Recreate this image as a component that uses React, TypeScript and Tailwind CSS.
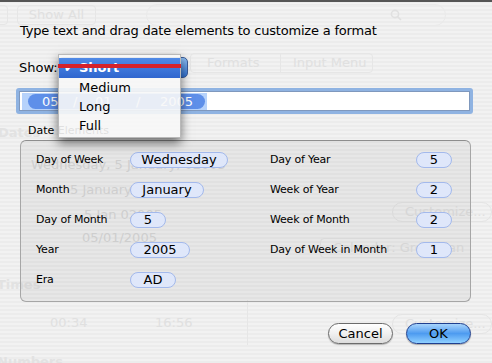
import React from 'react';

const leftRows = [
  { label: 'Day of Week', value: 'Wednesday', w: 'w-[98px]' },
  { label: 'Month', value: 'January', w: 'w-[74px]' },
  { label: 'Day of Month', value: '5', w: 'w-[36px]' },
  { label: 'Year', value: '2005', w: 'w-[60px]' },
  { label: 'Era', value: 'AD', w: 'w-[46px]' },
];

const rightRows = [
  { label: 'Day of Year', value: '5' },
  { label: 'Week of Year', value: '2' },
  { label: 'Week of Month', value: '2' },
  { label: 'Day of Week in Month', value: '1' },
];

const Token = ({ value, w }: { value: string; w: string }) => (
  <span className={`${w} h-[16px] rounded-full border border-[#a3b9ec] bg-[#dfe7fa] text-[13px] leading-[14px] text-black flex items-center justify-center`}>
    {value}
  </span>
);

// the window behind the sheet, seen faintly through it
const Ghost = () => (
  <div className="absolute inset-0 text-[#e0e0e0] text-[13px] pointer-events-none">
    <div className="absolute left-[-10px] top-[5px] w-[18px] h-[20px] rounded border border-[#e6e6e6]" />
    <div className="absolute left-[17px] top-[5px] w-[79px] h-[20px] rounded border border-[#e6e6e6] flex items-center justify-center">Show All</div>
    <div className="absolute left-[146px] top-[4px] w-[300px] h-[22px] rounded-full border border-[#eaeaea] flex items-center pl-[243px]">
      <svg width="12" height="12" viewBox="0 0 12 12" fill="none" stroke="#e0e0e0" strokeWidth="1.6"><circle cx="5" cy="5" r="3.6" /><path d="M7.6 7.6 11 11" /></svg>
    </div>
    <div className="absolute left-[190px] top-[53px] w-[183px] h-[20px] rounded border border-[#e6e6e6] flex items-center">
      <span className="w-[90px] pl-[16px] border-r border-[#e6e6e6]">Formats</span>
      <span className="pl-[12px]">Input Menu</span>
    </div>
    <div className="absolute left-[-2px] top-[123px] font-bold text-[#e2e2e2]">Dates</div>
    <div className="absolute left-[31px] top-[155px] text-[#d8d8d8]">Wednesday, 5 January, 02005</div>
    <div className="absolute left-[70px] top-[180px] text-[#d8d8d8]">5 January 02005</div>
    <div className="absolute left-[84px] top-[205px] text-[#d8d8d8]">5 Jan 02005</div>
    <div className="absolute left-[82px] top-[228px] text-[#d8d8d8]">05/01/2005</div>
    <div className="absolute left-[392px] top-[202px] w-[100px] h-[20px] rounded-full border border-[#e4e4e4] pl-[12px] leading-[18px]">Customize...</div>
    <div className="absolute left-[320px] top-[238px] w-[175px] h-[20px] rounded border border-[#e4e4e4] leading-[18px] pl-[12px]">Calendar: Gregorian</div>
    <div className="absolute left-[-3px] top-[275px] font-bold text-[#e2e2e2]">Times</div>
    <div className="absolute left-[50px] top-[313px]">00:34</div>
    <div className="absolute left-[155px] top-[313px]">16:56</div>
    <div className="absolute left-[247px] top-[300px] w-px h-[45px] bg-[#e6e6e6]" />
    <div className="absolute left-[392px] top-[314px] w-[100px] h-[20px] rounded-full border border-[#e4e4e4] pl-[12px] leading-[18px]">Customize...</div>
    <div className="absolute left-[-3px] top-[352px] font-bold text-[#e2e2e2]">Numbers</div>
  </div>
);

export default function App() {
  return (
    <div className="relative w-[492px] h-[363px] overflow-hidden bg-[repeating-linear-gradient(0deg,#ececec_0px,#ececec_2px,#f2f2f2_2px,#f2f2f2_4px)] font-['DejaVu_Sans',sans-serif] text-black">
      <Ghost />

      <div className="relative flex flex-col">
        <div className="h-[2px] bg-[#555]" />

        <div className="mt-[21px] pl-[20px] h-[16px] text-[13px] leading-[16px] tracking-[-0.2px]">
          Type text and drag date elements to customize a format
        </div>

        <div className="mt-[18px] flex items-center h-[21px] pl-[19px]">
          <span className="text-[13px] w-[39px]">Show:</span>
          <div className="w-[130px] h-[21px] rounded-[5px] border border-[#3b5d9a] bg-gradient-to-b from-[#8fc0f5] to-[#2f6fcf]" />
        </div>

        <div className="mt-[10px] ml-[16px] w-[457px] h-[26px] rounded-[3px] bg-[#8fb3e2] p-[3px]">
          <div className="h-full bg-white border border-[#7f98bd] flex items-center pl-[2px]">
            <div className="w-[185px] h-[17px] bg-[#b6d2fb] flex items-center pl-[6px]">
              <div className="relative w-[177px] h-[15px] rounded-full bg-[#5e8fe9] text-white text-[13px] leading-[15px]">
                <span className="absolute left-[14px]">05</span>
                <span className="absolute left-[45px]">/</span>
                <span className="absolute left-[67px]">01</span>
                <span className="absolute left-[108px]">/</span>
                <span className="absolute left-[132px]">2005</span>
              </div>
            </div>
          </div>
        </div>

        <div className="mt-[11px] pl-[28px] h-[12px] text-[11px] leading-[12px]">Date Elements</div>

        <div className="mt-[3px] ml-[20px] w-[451px] h-[162px] rounded-[6px] border border-[#a6a6a6] border-t-[#8e8e8e] bg-black/[0.045] pt-[4px] pl-[15px] flex">
          <div className="w-[234px] flex flex-col">
            {leftRows.map((r) => (
              <div key={r.label} className="h-[30px] flex items-center">
                <span className="w-[94px] text-[11px] tracking-[-0.2px]">{r.label}</span>
                <Token value={r.value} w={r.w} />
              </div>
            ))}
          </div>
          <div className="flex flex-col">
            {rightRows.map((r) => (
              <div key={r.label} className="h-[30px] flex items-center">
                <span className="w-[146px] text-[11px] tracking-[-0.2px]">{r.label}</span>
                <Token value={r.value} w="w-[36px]" />
              </div>
            ))}
          </div>
        </div>

        <div className="mt-[21px] h-[21px] flex justify-end gap-[13px] pr-[21px]">
          <button className="w-[65px] h-[21px] rounded-full border border-[#6b6b6b] bg-gradient-to-b from-white via-[#f0f0f0] to-[#dcdcdc] text-[13px] leading-[19px] shadow-[0_1px_1px_rgba(0,0,0,0.25)]">
            Cancel
          </button>
          <button className="w-[65px] h-[21px] rounded-full border border-[#1f3f8f] bg-gradient-to-b from-[#a8d4fb] via-[#4d9bf0] to-[#8fd0ff] text-[13px] leading-[19px] shadow-[0_1px_1px_rgba(0,0,0,0.3)]">
            OK
          </button>
        </div>
      </div>

      {/* popup menu, open over the sheet */}
      <div className="absolute left-[58px] top-[54px] w-[123px] h-[84px] bg-[#f7f7f7]/90 border border-[#b9b9b9] shadow-[0_5px_10px_rgba(0,0,0,0.55)] pt-[3px] text-[13px]">
        <div className="relative h-[20px] bg-gradient-to-b from-[#4f8ae6] to-[#2f66cf] text-white font-bold flex items-center">
          <span className="w-[20px] pl-[5px] text-[12px]">✔</span>
          <span>Short</span>
        </div>
        {['Medium', 'Long', 'Full'].map((m) => (
          <div key={m} className="h-[19px] leading-[19px] pl-[20px]">{m}</div>
        ))}
      </div>
      <div className="absolute left-[58px] top-[64px] w-[123px] h-[4px] bg-[#d6222a]" />
    </div>
  );
}
